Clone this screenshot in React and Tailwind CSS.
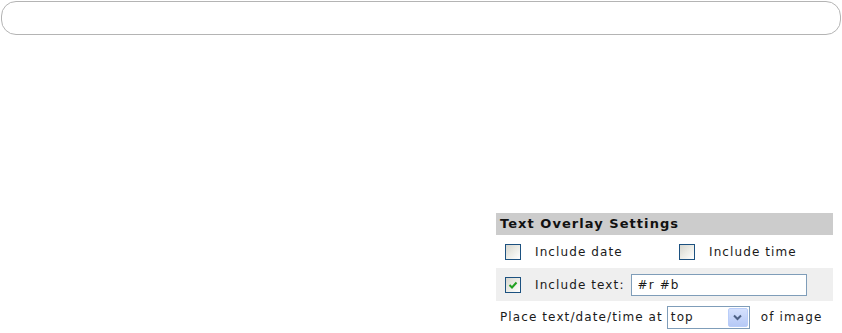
import React from 'react';

const font = { fontFamily: '"DejaVu Sans", Verdana, sans-serif' };

function Box({ checked }) {
    return (
        <span className="flex items-center justify-center w-[16px] h-[16px] border border-[#1c5180] bg-gradient-to-br from-[#d6d6cf] via-[#ececE6] to-white shrink-0">
            {checked && (
                <svg width="10" height="10" viewBox="0 0 10 10">
                    <path d="M1.5 5 L4 7.5 L8.5 2.5" fill="none" stroke="#21a121" strokeWidth="2" />
                </svg>
            )}
        </span>
    );
}

export default function App() {
    return (
        <div className="w-[842px] h-[333px] bg-white overflow-hidden" style={font}>
            {/* barre du haut */}
            <div className="mx-[1px] mt-[1px] h-[34px] rounded-[15px] border border-[#b4b4b4]" />

            {/* panneau */}
            <div className="ml-[496px] mt-[178px] w-[337px] text-[12px] tracking-[1.1px] text-[#1a1a1a]">
                <div className="h-[22px] bg-[#cccccc] flex items-center pl-[4px] text-[13px] font-bold tracking-[1.05px] text-[#111]">
                    Text Overlay Settings
                </div>

                <div className="h-[33px] flex items-center pl-[9px]">
                    <div className="w-[174px] flex items-center gap-[14px]">
                        <Box />
                        <span>Include date</span>
                    </div>
                    <div className="flex items-center gap-[14px]">
                        <Box />
                        <span>Include time</span>
                    </div>
                </div>

                <div className="h-[33px] bg-[#efefef] flex items-center pl-[9px]">
                    <Box checked />
                    <span className="ml-[14px]">Include text:</span>
                    <div className="ml-[6px] w-[176px] h-[22px] border border-[#7f9db9] bg-white flex items-center pl-[6px]">
                        #r #b
                    </div>
                </div>

                <div className="h-[32px] flex items-center pl-[4px]">
                    <span>Place text/date/time at</span>
                    <div className="ml-[4px] w-[83px] h-[23px] border border-[#7f9db9] bg-white flex items-center justify-between pl-[3px] pr-[1px]">
                        <span>top</span>
                        <span className="w-[20px] h-[19px] rounded-[2px] border border-[#b9cdf9] bg-gradient-to-b from-[#d5e1fd] to-[#b6c9f6] flex items-center justify-center">
                            <svg width="9" height="7" viewBox="0 0 9 7">
                                <path d="M1 1.5 L4.5 5 L8 1.5" fill="none" stroke="#4d6185" strokeWidth="2" />
                            </svg>
                        </span>
                    </div>
                    <span className="ml-[11px]">of image</span>
                </div>
            </div>
        </div>
    );
}
